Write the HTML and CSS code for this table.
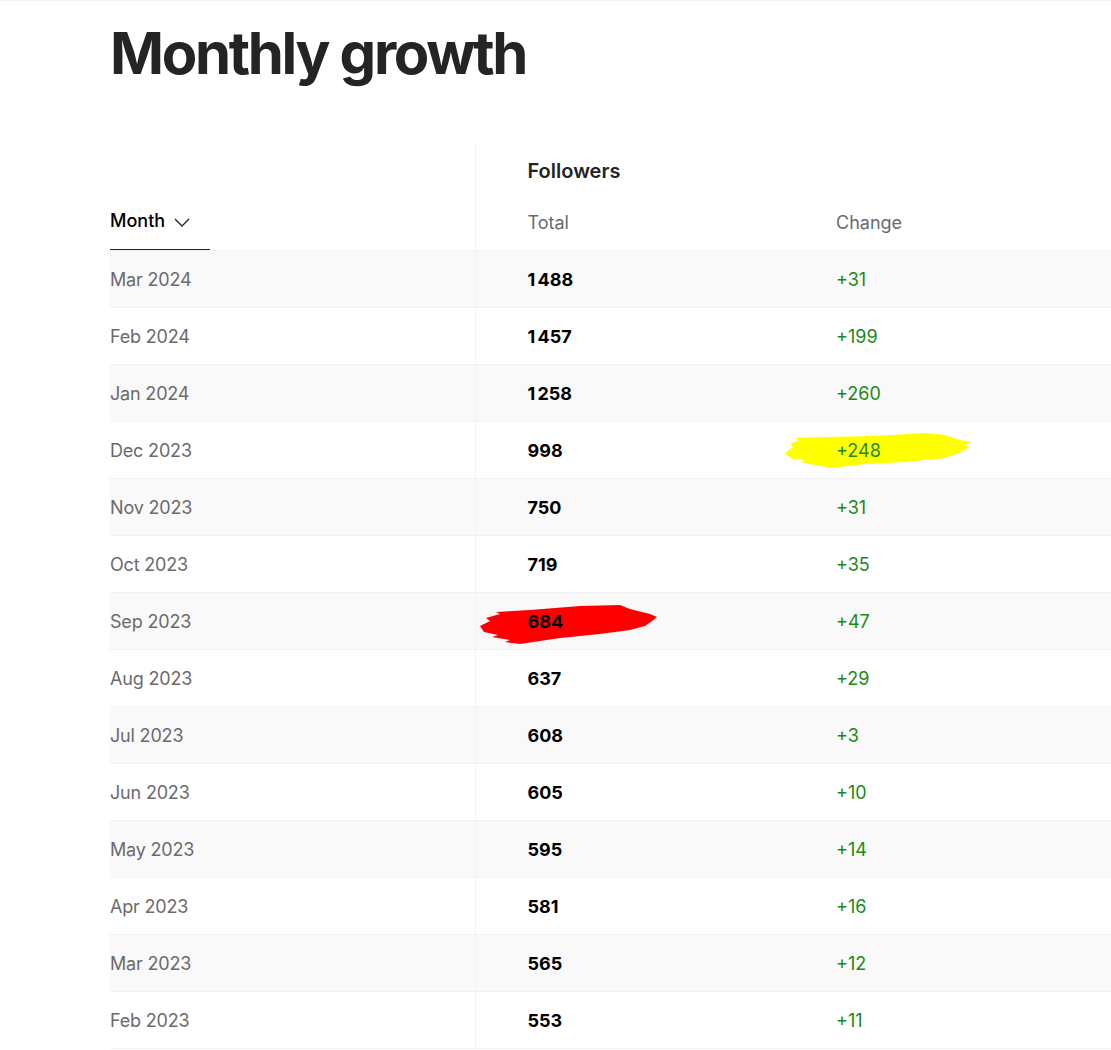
FILE: index.html
```html
<!DOCTYPE html>
<html lang="en">
<head>
<meta charset="utf-8">
<title>Monthly growth</title>
<link rel="stylesheet" href="styles.css">
</head>
<body>
<main class="page">
  <h1 class="title">Monthly growth</h1>
  <table class="growth">
    <colgroup>
      <col class="col-month">
      <col class="col-total">
      <col class="col-change">
    </colgroup>
    <thead>
      <tr class="group-row">
        <th class="month-head" rowspan="2">
          <span class="sort">Month
            <svg class="chev" width="16" height="16" viewBox="0 0 16 16"><path d="M1 5 L8 12 L15 5" fill="none" stroke="#242424" stroke-width="1.3"/></svg>
          </span>
        </th>
        <th class="group" colspan="2">Followers</th>
      </tr>
      <tr class="sub-row">
        <th class="sub total-col">Total</th>
        <th class="sub">Change</th>
      </tr>
    </thead>
    <tbody>
      <tr><td class="m">Mar 2024</td><td class="t">1 488</td><td class="c">+31</td></tr>
      <tr><td class="m">Feb 2024</td><td class="t">1 457</td><td class="c">+199</td></tr>
      <tr><td class="m">Jan 2024</td><td class="t">1 258</td><td class="c">+260</td></tr>
      <tr><td class="m">Dec 2023</td><td class="t">998</td><td class="c marked">
        <svg class="brush brush-yellow" width="186" height="37" viewBox="0 0 186 37"><path d="M0 21 L8 15 L5 12 L14 8 L10 6 L40 5 L90 4 L140 1 L160 3 L175 8 L186 10 L180 13 L184 15 L176 20 L160 26 L120 30 L80 32 L45 36 L25 32 L15 30 L20 28 L8 27 L3 24 Z" fill="#ffff00"/></svg>
        <span class="val">+248</span></td></tr>
      <tr><td class="m">Nov 2023</td><td class="t">750</td><td class="c">+31</td></tr>
      <tr><td class="m">Oct 2023</td><td class="t">719</td><td class="c">+35</td></tr>
      <tr><td class="m">Sep 2023</td><td class="t marked">
        <svg class="brush brush-red" width="177" height="42" viewBox="0 0 177 42"><path d="M0 22 L10 17 L6 14 L20 10 L16 8 L50 6 L100 2 L140 1 L150 5 L170 10 L177 13 L172 17 L165 22 L150 26 L120 30 L80 34 L40 40 L25 38 L30 36 L12 33 L18 31 L4 28 Z" fill="#ff0000"/></svg>
        <span class="val">684</span></td><td class="c">+47</td></tr>
      <tr><td class="m">Aug 2023</td><td class="t">637</td><td class="c">+29</td></tr>
      <tr><td class="m">Jul 2023</td><td class="t">608</td><td class="c">+3</td></tr>
      <tr><td class="m">Jun 2023</td><td class="t">605</td><td class="c">+10</td></tr>
      <tr><td class="m">May 2023</td><td class="t">595</td><td class="c">+14</td></tr>
      <tr><td class="m">Apr 2023</td><td class="t">581</td><td class="c">+16</td></tr>
      <tr><td class="m">Mar 2023</td><td class="t">565</td><td class="c">+12</td></tr>
      <tr><td class="m">Feb 2023</td><td class="t">553</td><td class="c">+11</td></tr>
    </tbody>
  </table>
</main>
</body>
</html>
```

FILE: styles.css
```css
html, body {
  margin: 0;
  padding: 0;
  background: #ffffff;
}
body {
  border-top: 1px solid #f2f2f2;
  font-family: Inter, "Noto Sans", "Liberation Sans", sans-serif;
  color: #242424;
  overflow: hidden;
}
.page {
  padding-left: 110px;
}
.title {
  margin: 0;
  padding-top: 16px;
  height: 142px;
  box-sizing: border-box;
  font-size: 58px;
  line-height: 72px;
  font-weight: 700;
  letter-spacing: -0.04em;
  color: #242424;
}
.growth {
  width: 1001px;
  border-collapse: collapse;
  border-spacing: 0;
  table-layout: fixed;
}
.col-month { width: 365px; }
.col-total { width: 309px; }
.col-change { width: 327px; }
.growth th, .growth td {
  padding: 0;
  text-align: left;
  white-space: nowrap;
}
.month-head {
  vertical-align: bottom;
}
.sort {
  display: inline-flex;
  align-items: center;
  gap: 9px;
  width: 100px;
  box-sizing: border-box;
  padding-bottom: 16px;
  border-bottom: 1px solid #242424;
  font-size: 18px;
  font-weight: 500;
  color: #000;
  line-height: 24px;
}
.chev {
  display: block;
  margin-top: 1px;
}
.group {
  height: 52px;
  padding-left: 52px !important;
  border-left: 1px solid #f2f2f2;
  font-size: 20px;
  font-weight: 600;
  color: #242424;
  vertical-align: middle;
  padding-top: 4px !important;
  box-sizing: border-box;
}
.sub {
  height: 55px;
  padding-left: 52px !important;
  font-size: 18px;
  font-weight: 400;
  color: #6b6b6b;
  vertical-align: middle;
}
.total-col {
  border-left: 1px solid #f2f2f2;
}
tbody tr {
  height: 57px;
  border-top: 1px solid #f2f2f2;
}
tbody tr:last-child {
  border-bottom: 1px solid #f2f2f2;
}
tbody tr:nth-child(odd) {
  background: #f9f9f9;
}
td {
  font-size: 18px;
  line-height: 24px;
  vertical-align: middle;
  padding-top: 1px !important;
}
td.m {
  color: #6b6b6b;
  letter-spacing: -0.01em;
}
td.t {
  padding-left: 52px !important;
  border-left: 1px solid #f2f2f2;
  font-weight: 700;
  color: #000;
  word-spacing: -2px;
}
td.c {
  padding-left: 52px !important;
  color: #1a8917;
}
.marked {
  position: relative;
}
.brush {
  position: absolute;
  z-index: 0;
}
.val {
  position: relative;
  z-index: 1;
}
.brush-yellow {
  left: 1px;
  top: 10px;
}
.brush-red {
  left: 4px;
  top: 11px;
}
```
